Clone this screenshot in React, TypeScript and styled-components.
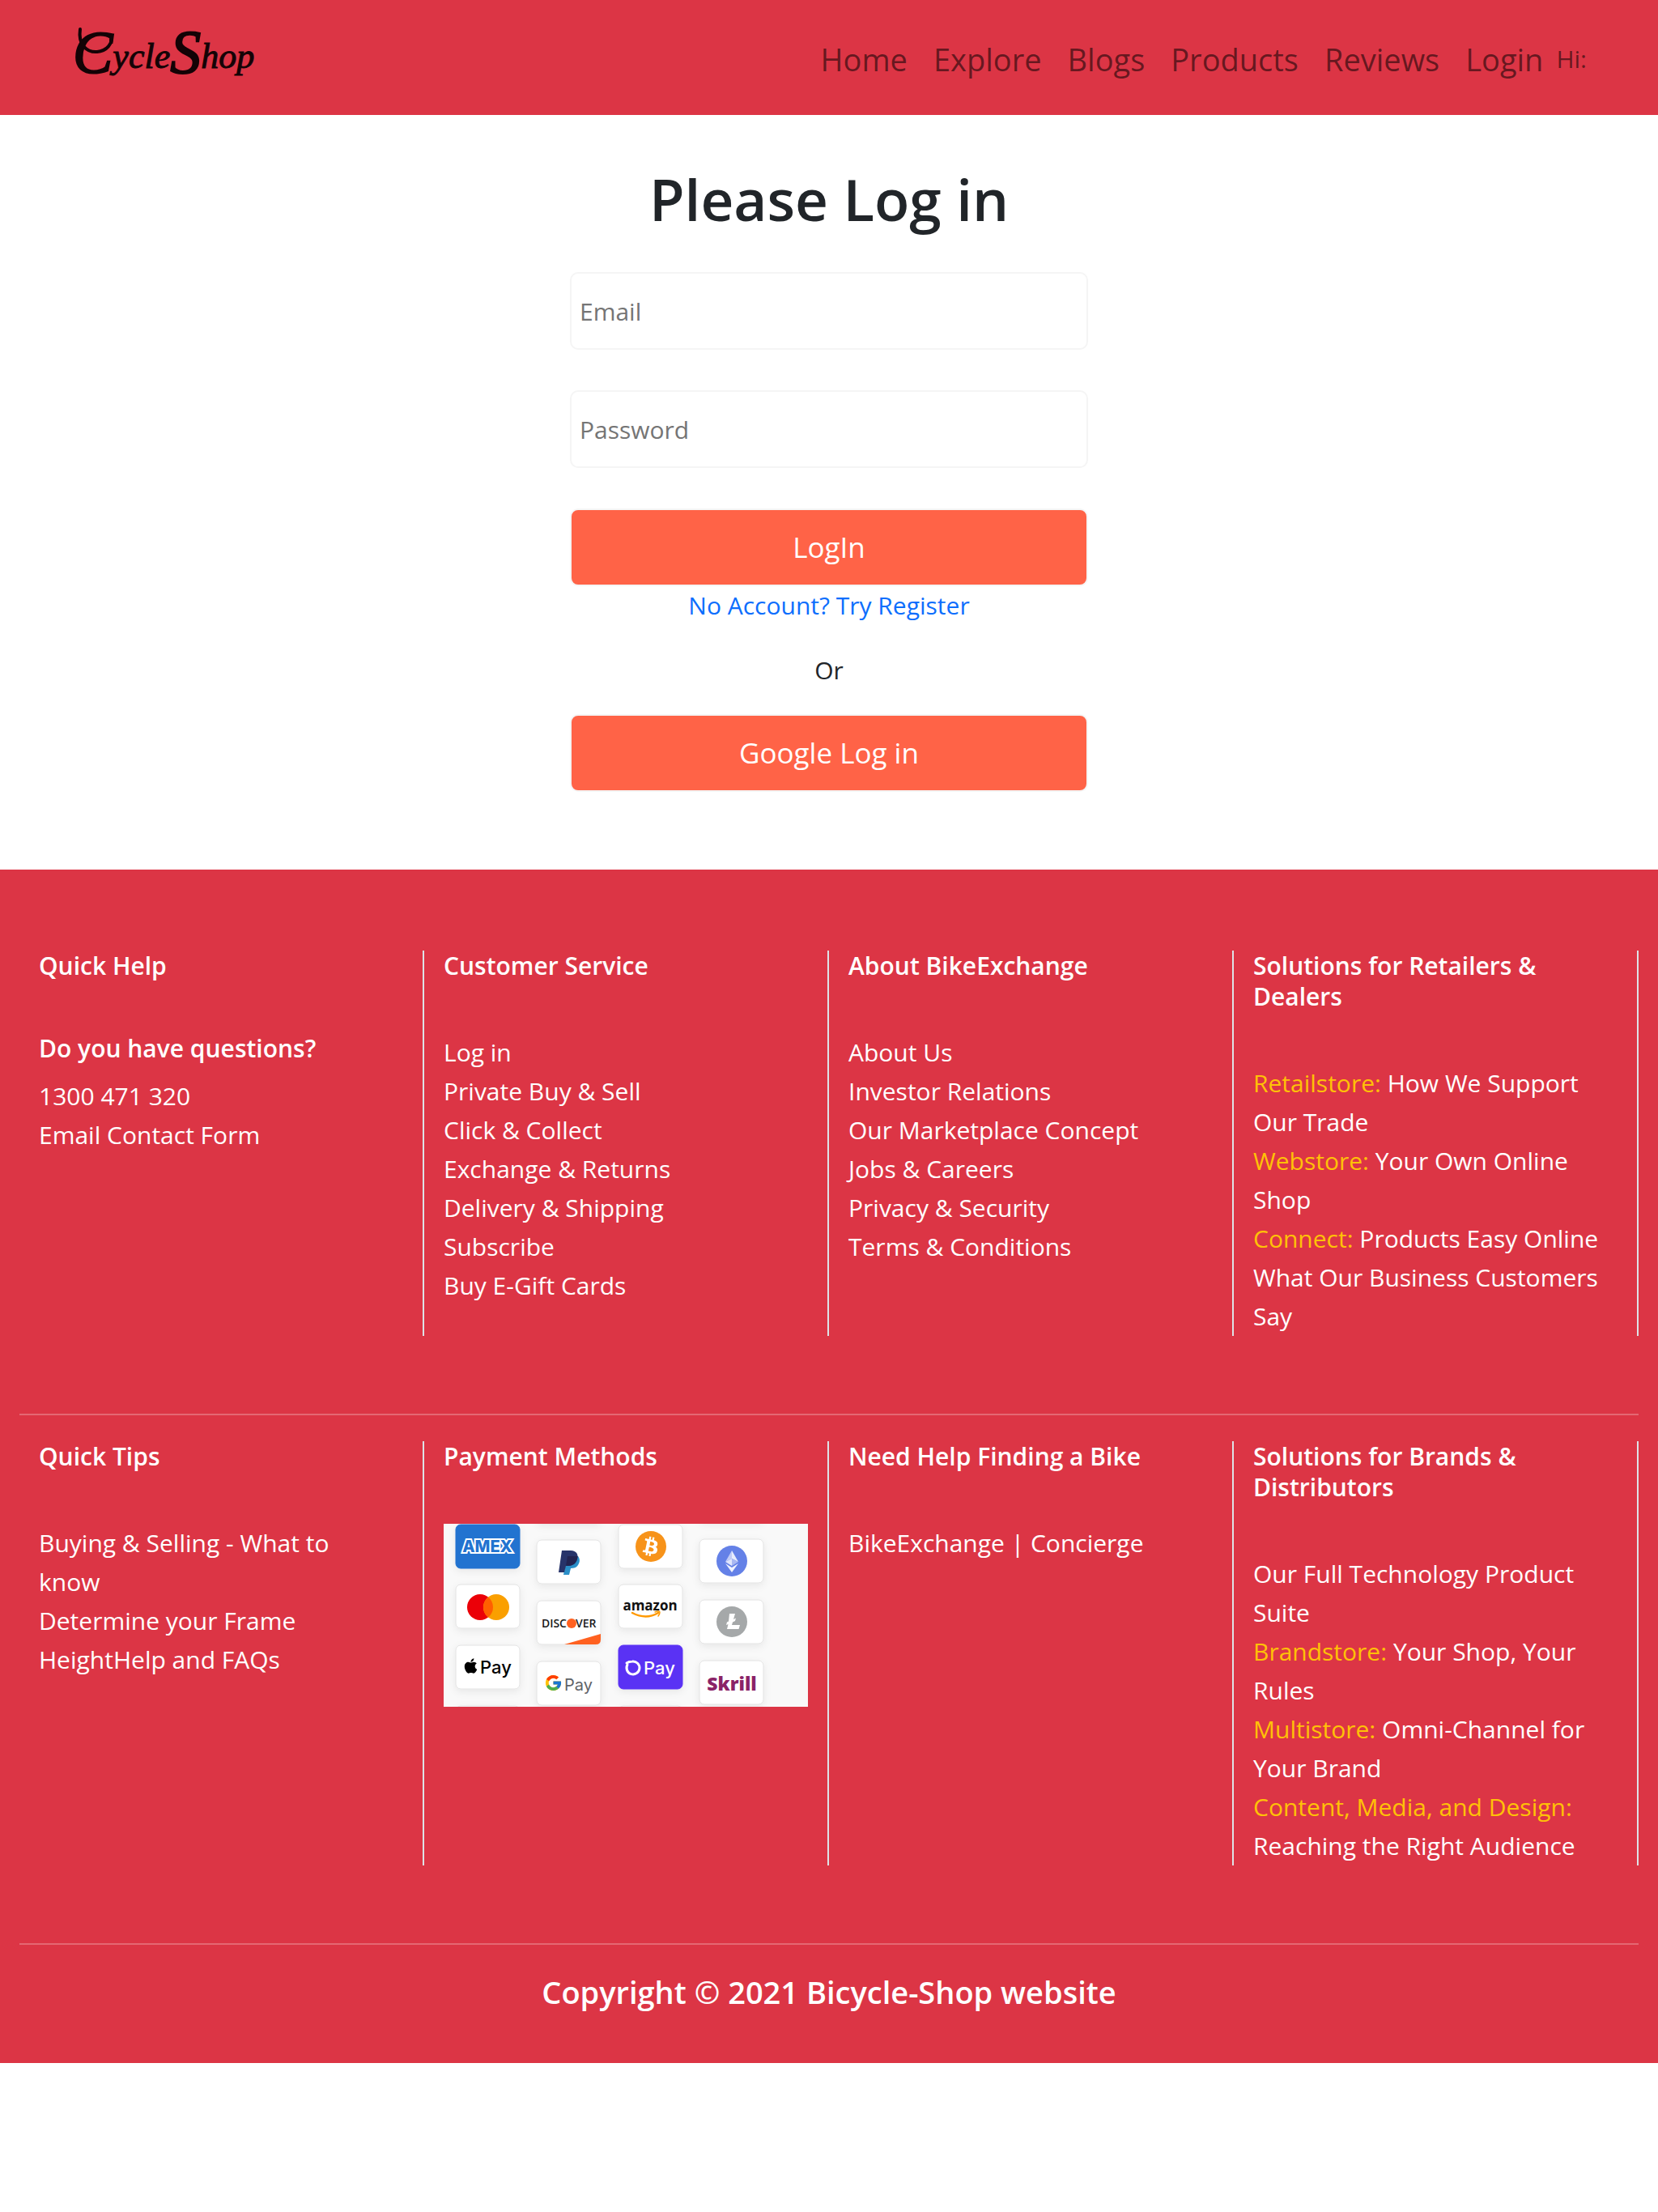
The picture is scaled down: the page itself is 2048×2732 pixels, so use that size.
import React from "react";
import styled, { createGlobalStyle } from "styled-components";
import { FaApple, FaBtc } from "react-icons/fa";
import { FcGoogle } from "react-icons/fc";

const red = "#dc3545";
const sans = '"Open Sans", "Noto Sans", sans-serif';

const GlobalStyle = createGlobalStyle`
  *, *::before, *::after { box-sizing: border-box; }
  body {
    margin: 0;
    background: #fff;
    color: #212529;
    font-family: ${sans};
    font-size: 30px;
    line-height: 48px;
  }
  h1, h2, h3, p, ul { margin: 0; padding: 0; font-weight: inherit; }
  a { text-decoration: none; }
`;

/* ---------- header ---------- */

const Header = styled.header`
  display: flex;
  align-items: center;
  justify-content: space-between;
  padding: 22px 88px 18px;
  background: ${red};
`;

const Brand = styled.a`
  display: flex;
  color: #140306;
`;

const Nav = styled.nav`
  display: flex;
  align-items: center;
  color: rgba(0, 0, 0, 0.55);
`;

const NavLink = styled.a`
  padding: 8px 16px;
  color: inherit;
  font-size: 38px;
  line-height: 60px;
`;

const Greeting = styled.span`
  color: inherit;
`;

/* ---------- login form ---------- */

const Main = styled.main`
  display: flex;
  flex-direction: column;
  align-items: center;
  padding: 58px 24px 96px;
`;

const Heading = styled.h1`
  margin-bottom: 44px;
  font-size: 71px;
  font-weight: 600;
  line-height: 92px;
`;

const Form = styled.form`
  display: flex;
  flex-direction: column;
  width: 100%;
  max-width: 640px;
`;

const Field = styled.input`
  width: 100%;
  height: 96px;
  margin-bottom: 50px;
  padding: 0 10px;
  border: 2px solid #f5f5f5;
  border-radius: 10px;
  background: #fff;
  color: #212529;
  font: inherit;
  &::placeholder { color: #757575; opacity: 1; }
`;

const Button = styled.button`
  width: 100%;
  height: 96px;
  padding: 0 12px 2px;
  border: 2px solid #f5f5f5;
  border-radius: 10px;
  background: #ff6347;
  color: #fff;
  font-family: inherit;
  font-size: 35px;
  cursor: pointer;
`;

const RegisterLink = styled.a`
  align-self: center;
  color: #0d6efd;
`;

const Divider = styled.p`
  margin: 32px 0 30px;
  text-align: center;
`;

/* ---------- footer ---------- */

const Footer = styled.footer`
  padding: 100px 24px 62px;
  background: ${red};
  color: #fff;
`;

const Row = styled.div`
  display: grid;
  grid-template-columns: repeat(4, minmax(0, 1fr));
  margin-bottom: 96px;
`;

const Column = styled.section`
  padding: 0 24px;
  border-right: 2px solid #dee2e6;
`;

const Title = styled.h2`
  margin-bottom: 64px;
  font-size: 30px;
  font-weight: 600;
  line-height: 38px;
`;

const Question = styled.h3`
  margin-bottom: 16px;
  font-size: 30px;
  font-weight: 600;
  line-height: 38px;
`;

const List = styled.ul`
  padding-right: 16px;
  list-style: none;
`;

const FooterLink = styled.a`
  color: #fff;
`;

const Store = styled.span`
  color: #ffc107;
`;

const Rule = styled.hr`
  height: 2px;
  margin: 0 0 32px;
  border: 0;
  background: #e46873;
`;

const Copyright = styled.p`
  font-size: 38px;
  font-weight: 600;
  line-height: 52px;
  text-align: center;
`;

const Payments = styled.svg`
  display: block;
  width: 100%;
  height: auto;
`;

function Logo() {
  return (
    <svg width="240" height="102" viewBox="0 0 240 102" role="img" aria-label="CycleShop" fill="currentColor">
      <text x="2" y="68" fontFamily='"Liberation Serif", serif' fontStyle="italic" stroke="currentColor">
        <tspan fontSize="74" strokeWidth="2">C</tspan>
        <tspan fontSize="44" strokeWidth="1" dy="-6">ycle</tspan>
        <tspan fontSize="76" strokeWidth="2" dy="6">S</tspan>
        <tspan fontSize="44" strokeWidth="1" dy="-6">hop</tspan>
      </text>
      <g fill="none" stroke="currentColor" strokeWidth="4" strokeLinecap="round">
        <path d="M11 14 C8 34 20 43 32 42 C44 41 51 32 50 22" />
      </g>
    </svg>
  );
}

const CARD_W = 79;
const CARD_H = 54;

function Card({ x, y, fill = "#fff", children }: { x: number; y: number; fill?: string; children?: React.ReactNode }) {
  return (
    <g transform={`translate(${x} ${y})`}>
      <rect width={CARD_W} height={CARD_H} rx="6" fill={fill} stroke={fill === "#fff" ? "#e2e2e2" : fill} filter="url(#card-shadow)" />
      {children}
    </g>
  );
}

function PaymentMethods() {
  return (
    <Payments viewBox="0 0 450 226" role="img" aria-label="Accepted payment methods">
      <defs>
        <filter id="card-shadow" x="-30%" y="-30%" width="160%" height="170%">
          <feDropShadow dx="0" dy="3" stdDeviation="5" floodColor="#000" floodOpacity="0.07" />
        </filter>
      </defs>
      <rect width="450" height="226" fill="#f9f9f9" />

      <Card x={15} y={225} />
      <Card x={115} y={-55} />
      <Card x={216} y={225} />
      <Card x={316} y={-57} />

      <Card x={15} y={1} fill="#2173d0">
        <text x="39" y="34" textAnchor="middle" fontFamily="Inter, sans-serif" fontWeight="800" fontSize="20" fill="#2173d0" stroke="#fff" strokeWidth="4" paintOrder="stroke">AMEX</text>
      </Card>
      <Card x={15} y={75}>
        <circle cx="30" cy="28" r="16" fill="#eb0008" />
        <circle cx="50" cy="28" r="16" fill="#fa9f00" />
        <path d="M40 15.5 A16 16 0 0 1 40 40.5 A16 16 0 0 1 40 15.5Z" fill="#ff5f00" />
      </Card>
      <Card x={15} y={150}>
        <FaApple x="8" y="15" size={21} color="#000" />
        <text x="30" y="35" fontFamily="Inter, sans-serif" fontWeight="500" fontSize="22" fill="#000">Pay</text>
      </Card>

      <Card x={115} y={20}>
        <path d="M38 20 H51 C54 24 53 28 51 31 C49 34 46 35 42 35 L40 43 H33Z" fill="#2a8fc8" />
        <path d="M31 13 H42 C49 13 52 18 50 24 C48 30 44 32 38 32 H36 L34 40 H27Z" fill="#27346a" />
        <path d="M38 20 H50.5 C50 29 44 32 38 32 H36Z" fill="#222451" />
      </Card>
      <Card x={115} y={95}>
        <text x="37" y="33" textAnchor="end" fontFamily='"Open Sans", sans-serif' fontWeight="600" fontSize="14" fill="#1a1a1a">DISC</text>
        <circle cx="43" cy="28" r="6" fill="#ff6120" />
        <text x="48" y="33" fontFamily='"Open Sans", sans-serif' fontWeight="600" fontSize="14" fill="#1a1a1a">VER</text>
        <path d="M34 54 L79 41 V48 Q79 54 73 54Z" fill="#ff6120" />
      </Card>
      <Card x={115} y={170}>
        <FcGoogle x="9" y="15" size={23} />
        <text x="34" y="36" fontFamily="Inter, sans-serif" fontSize="20" fill="#5f6368">Pay</text>
      </Card>

      <Card x={216} y={1}>
        <circle cx="40" cy="27" r="19" fill="#f7931a" />
        <g transform="rotate(12 40 27)">
          <FaBtc x="28" y="15" size={24} color="#fff" />
        </g>
      </Card>
      <Card x={216} y={75}>
        <text x="39" y="32" textAnchor="middle" fontFamily='"Open Sans", sans-serif' fontWeight="700" fontSize="17" fill="#111">amazon</text>
        <path d="M17 35 Q34 44 49 35" fill="none" stroke="#ff9900" strokeWidth="2.5" strokeLinecap="round" />
        <path d="M45 34 Q50 32 51 34 Q51 37 49 39" fill="none" stroke="#ff9900" strokeWidth="1.5" strokeLinecap="round" />
      </Card>
      <Card x={216} y={150} fill="#5a31f4">
        <path d="M10 22 Q13 20 17 20 A8 8 0 1 1 11 24" fill="none" stroke="#fff" strokeWidth="3" strokeLinecap="round" />
        <text x="31" y="36" fontFamily="Inter, sans-serif" fontWeight="500" fontSize="22" fill="#fff">Pay</text>
      </Card>

      <Card x={316} y={19}>
        <circle cx="40" cy="27" r="19" fill="#6481e7" />
        <path d="M40 14 L32 28 L40 24Z" fill="#c1ccf7" />
        <path d="M40 14 L48 28 L40 24Z" fill="#e8ecfd" />
        <path d="M32 28 L40 24 V33Z" fill="#e0e6fc" />
        <path d="M48 28 L40 24 V33Z" fill="#a9b8f2" />
        <path d="M32 30 L40 35 L48 30 L40 41Z" fill="#eff2fe" />
      </Card>
      <Card x={316} y={94}>
        <circle cx="40" cy="27" r="19" fill="#a5a8a9" />
        <path d="M37 17 H44 L42 24 L45 22.5 L44 26 L41 27.5 L40 31 H50 L48.5 36 H34 L35.5 30 L33 31 L34 27.5 L36 26.5Z" fill="#fff" />
      </Card>
      <Card x={316} y={169}>
        <text x="40" y="37" textAnchor="middle" fontFamily='"Open Sans", sans-serif' fontWeight="800" fontSize="23" fill="#8a2367">Skrill</text>
      </Card>
    </Payments>
  );
}

type Item = { text: string; store?: string };

function Links({ items }: { items: Item[] }) {
  return (
    <List>
      {items.map(({ text, store }) => (
        <li key={text}>
          <FooterLink href="#">
            {store && <Store>{store} </Store>}
            {text}
          </FooterLink>
        </li>
      ))}
    </List>
  );
}

const plain = (...texts: string[]): Item[] => texts.map((text) => ({ text }));

export default function App() {
  return (
    <>
      <GlobalStyle />
      <Header>
        <Brand href="#"><Logo /></Brand>
        <Nav>
          {["Home", "Explore", "Blogs", "Products", "Reviews", "Login"].map((name) => (
            <NavLink key={name} href="#">{name}</NavLink>
          ))}
          <Greeting>Hi:</Greeting>
        </Nav>
      </Header>

      <Main>
        <Heading>Please Log in</Heading>
        <Form onSubmit={(e) => e.preventDefault()}>
          <Field type="email" aria-label="Email" placeholder="Email" />
          <Field type="password" aria-label="Password" placeholder="Password" />
          <Button type="submit">LogIn</Button>
          <RegisterLink href="#">No Account? Try Register</RegisterLink>
          <Divider>Or</Divider>
          <Button type="button">Google Log in</Button>
        </Form>
      </Main>

      <Footer>
        <Row>
          <Column>
            <Title>Quick Help</Title>
            <Question>Do you have questions?</Question>
            <Links items={plain("1300 471 320", "Email Contact Form")} />
          </Column>
          <Column>
            <Title>Customer Service</Title>
            <Links items={plain("Log in", "Private Buy & Sell", "Click & Collect", "Exchange & Returns", "Delivery & Shipping", "Subscribe", "Buy E-Gift Cards")} />
          </Column>
          <Column>
            <Title>About BikeExchange</Title>
            <Links items={plain("About Us", "Investor Relations", "Our Marketplace Concept", "Jobs & Careers", "Privacy & Security", "Terms & Conditions")} />
          </Column>
          <Column>
            <Title>Solutions for Retailers & Dealers</Title>
            <Links
              items={[
                { store: "Retailstore:", text: "How We Support Our Trade" },
                { store: "Webstore:", text: "Your Own Online Shop" },
                { store: "Connect:", text: "Products Easy Online" },
                { text: "What Our Business Customers Say" },
              ]}
            />
          </Column>
        </Row>
        <Rule />
        <Row>
          <Column>
            <Title>Quick Tips</Title>
            <Links items={plain("Buying & Selling - What to know", "Determine your Frame HeightHelp and FAQs")} />
          </Column>
          <Column>
            <Title>Payment Methods</Title>
            <PaymentMethods />
          </Column>
          <Column>
            <Title>Need Help Finding a Bike</Title>
            <Links items={plain("BikeExchange | Concierge")} />
          </Column>
          <Column>
            <Title>Solutions for Brands & Distributors</Title>
            <Links
              items={[
                { text: "Our Full Technology Product Suite" },
                { store: "Brandstore:", text: "Your Shop, Your Rules" },
                { store: "Multistore:", text: "Omni-Channel for Your Brand" },
                { store: "Content, Media, and Design:", text: "Reaching the Right Audience" },
              ]}
            />
          </Column>
        </Row>
        <Rule />
        <Copyright>Copyright © 2021 Bicycle-Shop website</Copyright>
      </Footer>
    </>
  );
}
